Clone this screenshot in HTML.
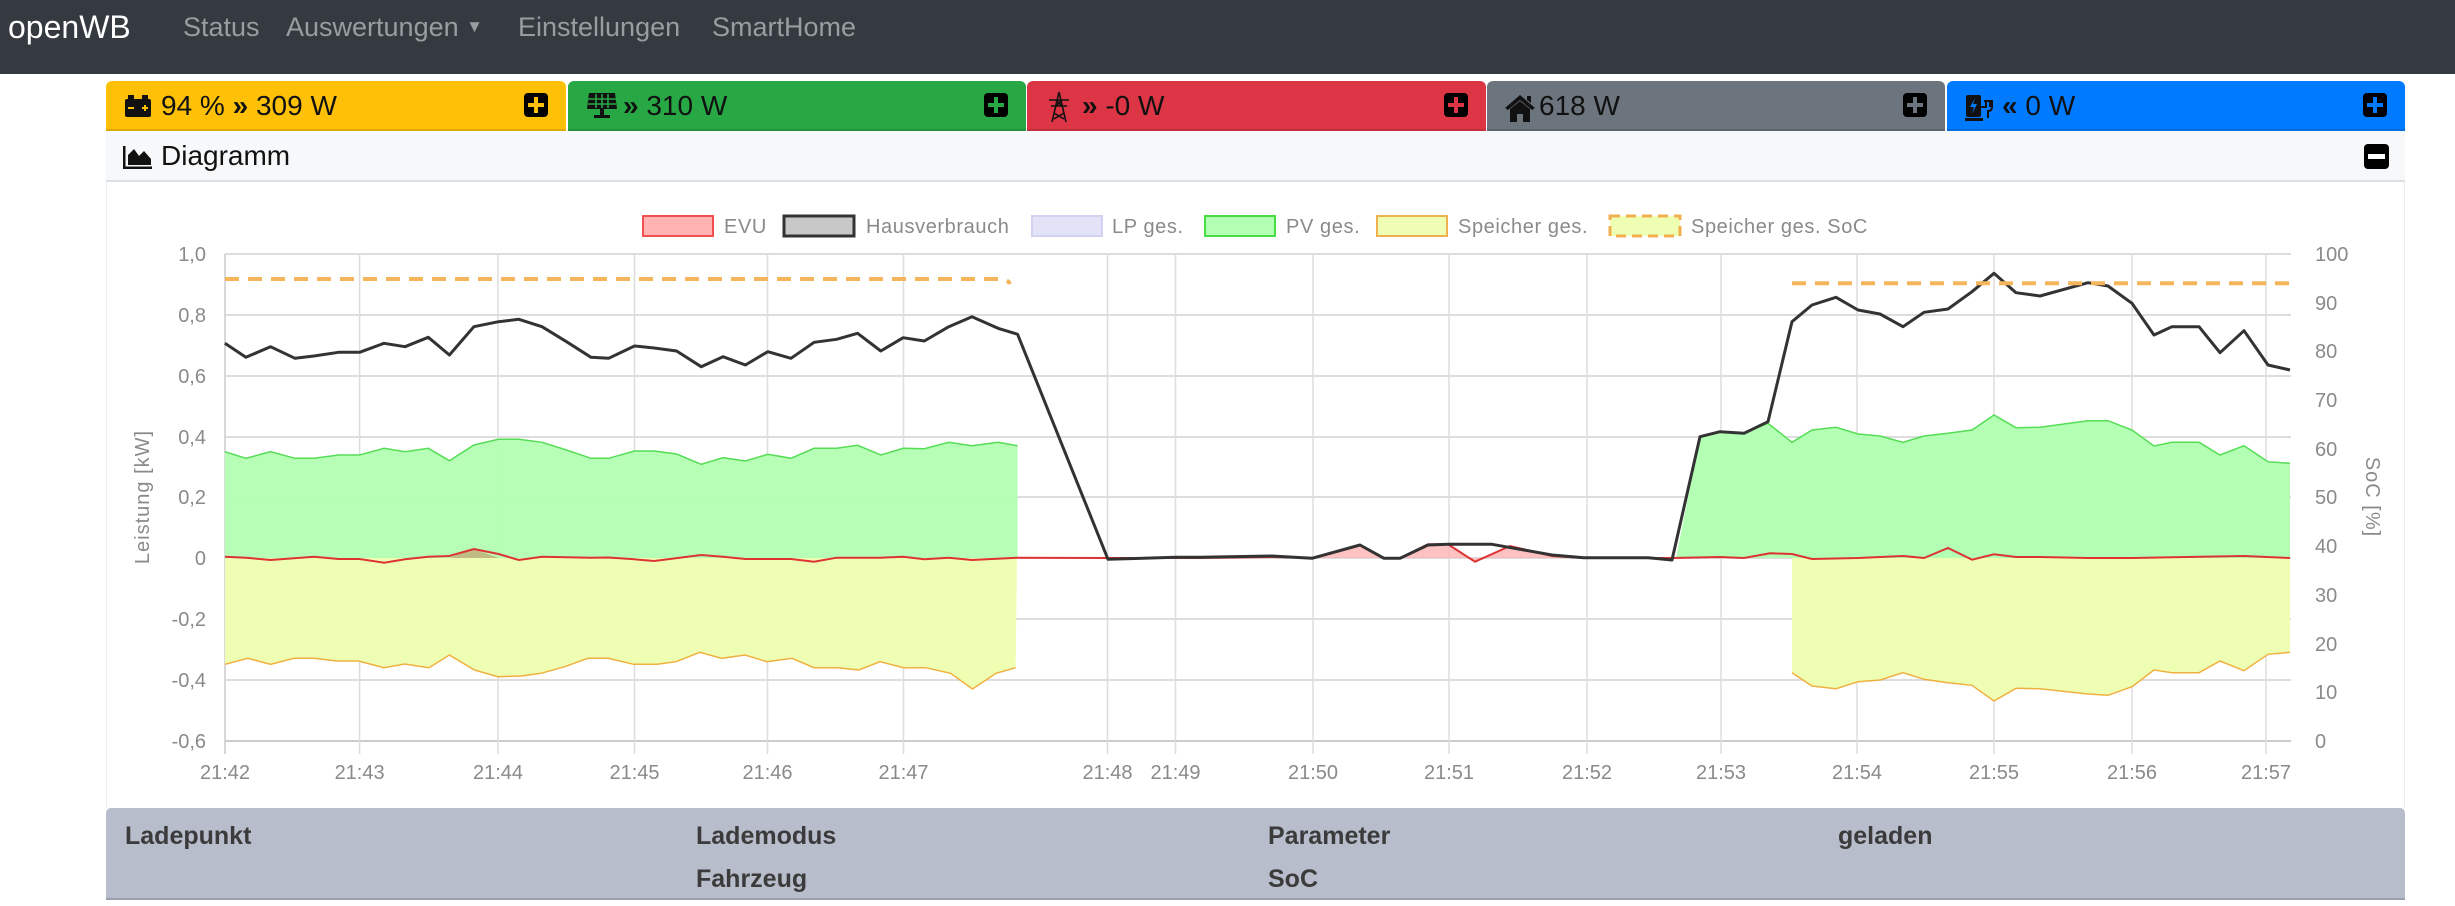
<!DOCTYPE html>
<html><head><meta charset="utf-8">
<style>
*{margin:0;padding:0;box-sizing:border-box}
body{width:2455px;height:906px;background:#fff;font-family:"Liberation Sans",sans-serif;overflow:hidden;position:relative}
.nav{position:absolute;left:0;top:0;width:2455px;height:74px;background:#343a40}
.nav span{position:absolute;top:12px;font-size:27px;color:#9a9da0}
.nav .brand{left:8px;top:9px;font-size:32px;color:#fff}
.tile{position:absolute;top:81px;height:50px;border-radius:6px 6px 0 0;border-bottom:2px solid rgba(0,0,0,.12)}
.tile .t{position:absolute;left:55px;top:9px;font-size:28px;color:#111;white-space:nowrap}
.tile svg.ic{position:absolute;left:17px;top:12px}
.plus{position:absolute;right:18px;top:12px;width:24px;height:24px;background:#000;border-radius:4px}
.plus:before{content:"";position:absolute;left:10px;top:4px;width:4px;height:16px;background:var(--c)}
.plus:after{content:"";position:absolute;left:4px;top:10px;width:16px;height:4px;background:var(--c)}
.hdr{position:absolute;left:106px;top:131px;width:2299px;height:51px;background:#f7f8f9;border-bottom:2px solid #dde0e3}
.hdr .t{position:absolute;left:55px;top:9px;font-size:28px;color:#111}
.minus{position:absolute;right:16px;top:13px;width:25px;height:25px;background:#000;border-radius:4px}
.minus:after{content:"";position:absolute;left:4px;top:10px;width:17px;height:5px;background:#fff}
.tbl{position:absolute;left:106px;top:808px;width:2299px;height:92px;background:#b8bdcb;border-radius:5px 5px 0 0;border-bottom:2px solid #9aa0ad}
.tbl span{position:absolute;font-size:25px;font-weight:bold;color:#3b3b3b}
</style></head><body>
<div class="nav">
<span class="brand">openWB</span>
<span style="left:183px">Status</span>
<span style="left:286px">Auswertungen <small style="font-size:17px;vertical-align:4px">▼</small></span>
<span style="left:518px">Einstellungen</span>
<span style="left:712px">SmartHome</span>
</div>

<div class="tile" style="left:106px;width:460px;background:#ffc107;--c:#ffc107">
<svg class="ic" width="30" height="26" viewBox="0 0 30 26"><rect x="2" y="6" width="26" height="18" rx="2" fill="#111"/><rect x="5" y="2" width="6" height="5" fill="#111"/><rect x="19" y="2" width="6" height="5" fill="#111"/><rect x="5" y="14" width="6" height="2" fill="#ffc107"/><rect x="19" y="14" width="6" height="2" fill="#ffc107"/><rect x="21" y="12" width="2" height="6" fill="#ffc107"/></svg>
<span class="t">94 % <b>»</b> 309 W</span><div class="plus"></div></div>
<div class="tile" style="left:568px;width:458px;background:#28a745;--c:#28a745">
<svg class="ic" width="34" height="30" viewBox="0 0 34 30" style="top:10px"><path d="M4 2H30L32 18H2Z" fill="#111"/><path d="M11 3V17M17 3V17M23 3V17M3 8H31M3 13H31" stroke="#28a745" stroke-width="1.6"/><rect x="15" y="18" width="4" height="6" fill="#111"/><rect x="9" y="24" width="16" height="3" fill="#111"/></svg>
<span class="t"><b>»</b> 310 W</span><div class="plus"></div></div>
<div class="tile" style="left:1027px;width:459px;background:#dc3545;--c:#dc3545">
<svg class="ic" width="30" height="32" viewBox="0 0 30 32" style="top:10px"><path d="M15 1L8 31M15 1L22 31M5 9H25M7 15H23M10 22L20 28M20 22L10 28M12 9L18 15M18 9L12 15" stroke="#111" stroke-width="1.6" fill="none"/></svg>
<span class="t"><b>»</b> -0 W</span><div class="plus"></div></div>
<div class="tile" style="left:1487px;width:458px;background:#6c757d;--c:#6c757d">
<svg class="ic" width="32" height="30" viewBox="0 0 32 30"><path d="M16 2L1 15L4 17L16 7L28 17L31 15Z M6 16V29H13V21H19V29H26V16L16 8Z M23 3H27V10L23 7Z" fill="#111"/></svg>
<span class="t" style="left:52px">618 W</span><div class="plus"></div></div>
<div class="tile" style="left:1947px;width:458px;background:#007bff;--c:#007bff">
<svg class="ic" width="34" height="30" viewBox="0 0 34 30"><rect x="2" y="2" width="15" height="22" rx="2" fill="#111"/><rect x="1" y="25" width="18" height="3" fill="#111"/><path d="M11 5L6 14H10L8 21L13 11H9Z" fill="#007bff"/><path d="M17 14H22V8M26 8V14M20 8H28V14Q28 18 24 18V25" stroke="#111" stroke-width="2" fill="none"/></svg>
<span class="t"><b>«</b> 0 W</span><div class="plus"></div></div>

<div class="hdr">
<svg style="position:absolute;left:17px;top:14px" width="30" height="24" viewBox="0 0 30 24"><path d="M1 1V23H29" stroke="#111" stroke-width="3" fill="none"/><path d="M5 20L5 10L11 4L16 11L21 6L28 14V20Z" fill="#111"/></svg>
<span class="t">Diagramm</span><div class="minus"></div></div>

<svg style="position:absolute;left:0;top:182px" width="2455" height="626" viewBox="0 182 2455 626" font-family="Liberation Sans, sans-serif">
<rect x="106" y="182" width="2299" height="626" fill="#fff"/>
<line x1="2404.5" y1="182" x2="2404.5" y2="808" stroke="#eee"/>
<line x1="106.5" y1="182" x2="106.5" y2="808" stroke="#eee"/>
<!-- legend -->
<g font-size="20" fill="#8a8a8a" letter-spacing="0.6">
<rect x="643" y="216" width="70" height="20" fill="#ffb3b3" stroke="#f05050" stroke-width="2"/><text x="724" y="233">EVU</text>
<rect x="784" y="216" width="70" height="20" fill="#c8c8c8" stroke="#333" stroke-width="3"/><text x="866" y="233">Hausverbrauch</text>
<rect x="1032" y="216" width="70" height="20" fill="#e3e3f8" stroke="#d2d2f0" stroke-width="2"/><text x="1112" y="233">LP ges.</text>
<rect x="1205" y="216" width="70" height="20" fill="#b3ffb3" stroke="#44dd44" stroke-width="2"/><text x="1286" y="233">PV ges.</text>
<rect x="1377" y="216" width="70" height="20" fill="#eeffb3" stroke="#f0b050" stroke-width="2"/><text x="1458" y="233">Speicher ges.</text>
<rect x="1610" y="216" width="70" height="20" fill="#eeffb3" stroke="#f0b050" stroke-width="3" stroke-dasharray="10 6"/><text x="1691" y="233">Speicher ges. SoC</text>
</g>
<!-- grid -->
<g stroke="#ddd" stroke-width="2">
<line x1="225" y1="254" x2="2291" y2="254"/><line x1="225" y1="315" x2="2291" y2="315"/><line x1="225" y1="376" x2="2291" y2="376"/><line x1="225" y1="437" x2="2291" y2="437"/><line x1="225" y1="497" x2="2291" y2="497"/><line x1="225" y1="558" x2="2291" y2="558"/><line x1="225" y1="619" x2="2291" y2="619"/><line x1="225" y1="680" x2="2291" y2="680"/><line x1="225" y1="741" x2="2291" y2="741" stroke="#ccc"/>
</g>
<g stroke="#ddd" stroke-width="1.5">
<line x1="225" y1="254" x2="225" y2="754" stroke="#ccc"/>
<line x1="359.6" y1="254" x2="359.6" y2="754"/><line x1="498" y1="254" x2="498" y2="754"/><line x1="634.5" y1="254" x2="634.5" y2="754"/><line x1="767.5" y1="254" x2="767.5" y2="754"/><line x1="903.5" y1="254" x2="903.5" y2="754"/><line x1="1107.5" y1="254" x2="1107.5" y2="754"/><line x1="1175.5" y1="254" x2="1175.5" y2="754"/><line x1="1313" y1="254" x2="1313" y2="754"/><line x1="1449" y1="254" x2="1449" y2="754"/><line x1="1587" y1="254" x2="1587" y2="754"/><line x1="1721" y1="254" x2="1721" y2="754"/><line x1="1857" y1="254" x2="1857" y2="754"/><line x1="1994" y1="254" x2="1994" y2="754"/><line x1="2132" y1="254" x2="2132" y2="754"/><line x1="2266" y1="254" x2="2266" y2="754"/>
</g>
<!-- fills -->
<polygon fill="#b3ffb3" fill-opacity="0.95" points="224.9,558 224.9,451.7 245.9,458.3 270.5,451.7 295,458.3 314,458.3 338.5,455 359.6,455 384,448.3 405,451.7 428.3,448.3 449.4,460.7 473.9,445 498.5,439.3 518.8,439.3 542,442.3 566.5,450 591,458.3 608.6,458.3 634.5,451 654.2,451 676.6,454 701.2,464.3 723,457.7 745.4,461 767.8,454.3 791,458.3 814.1,448.3 836.6,448.3 857.6,445.3 880.8,455 903.2,448.3 924.3,448.7 948.8,442.3 972,445.7 998,442.3 1017.6,445.7 1017.6,558"/>
<polyline fill="none" stroke="#55dd55" stroke-width="1.5" points="224.9,451.7 245.9,458.3 270.5,451.7 295,458.3 314,458.3 338.5,455 359.6,455 384,448.3 405,451.7 428.3,448.3 449.4,460.7 473.9,445 498.5,439.3 518.8,439.3 542,442.3 566.5,450 591,458.3 608.6,458.3 634.5,451 654.2,451 676.6,454 701.2,464.3 723,457.7 745.4,461 767.8,454.3 791,458.3 814.1,448.3 836.6,448.3 857.6,445.3 880.8,455 903.2,448.3 924.3,448.7 948.8,442.3 972,445.7 998,442.3 1017.6,445.7"/>
<polygon fill="#b3ffb3" points="1676,558 1700,436.7 1720,431.7 1744,433.3 1768,423.3 1792,442.3 1812,430 1836,427.3 1858,434 1880,436 1903,442.3 1924,436 1948,433.3 1972,430 1994,415 2016,427.7 2040,427.3 2088,420.7 2108,420.7 2132,430 2154,446 2172,442.3 2199,442.3 2220,455 2244,445.7 2268,461.7 2290,463.3 2290,558"/>
<polyline fill="none" stroke="#55dd55" stroke-width="1.5" points="1700,436.7 1720,431.7 1744,433.3 1768,423.3 1792,442.3 1812,430 1836,427.3 1858,434 1880,436 1903,442.3 1924,436 1948,433.3 1972,430 1994,415 2016,427.7 2040,427.3 2088,420.7 2108,420.7 2132,430 2154,446 2172,442.3 2199,442.3 2220,455 2244,445.7 2268,461.7 2290,463.3"/>
<polygon fill="#eeffb3" points="225,558 225,664.3 247.8,658.3 270.6,664.3 294,658.3 313.7,658.3 337,661 358.4,661 384,667.7 404.7,664 429,667.7 449.4,655 474.5,670 498,676.7 521.6,676 541,673.3 564.7,666.7 588,658.3 608,658.3 633.7,664.3 657,664.3 676,661.7 700,652.3 721.6,658.3 745,655 767,661.7 792,658.3 814,667.7 837.6,667.7 858.8,670 880,661.7 903.5,667.7 925.5,667.7 950.6,673.3 972.5,689 996,673.3 1015.7,667.7 1017,558"/>
<polyline fill="none" stroke="#f0b040" stroke-width="1.5" points="225,664.3 247.8,658.3 270.6,664.3 294,658.3 313.7,658.3 337,661 358.4,661 384,667.7 404.7,664 429,667.7 449.4,655 474.5,670 498,676.7 521.6,676 541,673.3 564.7,666.7 588,658.3 608,658.3 633.7,664.3 657,664.3 676,661.7 700,652.3 721.6,658.3 745,655 767,661.7 792,658.3 814,667.7 837.6,667.7 858.8,670 880,661.7 903.5,667.7 925.5,667.7 950.6,673.3 972.5,689 996,673.3 1015.7,667.7"/>
<polygon fill="#eeffb3" points="1792,558 1792,672.7 1812,686 1836,688.7 1858,681.7 1880,680 1903,672.7 1924,679.3 1948,682.7 1972,685.3 1994,701 2016,688.3 2040,688.7 2088,694 2108,695.3 2132,686.7 2154,670 2172,672.7 2199,672.7 2220,661 2244,670.7 2268,654.3 2290,652.3 2290,558"/>
<polyline fill="none" stroke="#f0b040" stroke-width="1.5" points="1792,672.7 1812,686 1836,688.7 1858,681.7 1880,680 1903,672.7 1924,679.3 1948,682.7 1972,685.3 1994,701 2016,688.3 2040,688.7 2088,694 2108,695.3 2132,686.7 2154,670 2172,672.7 2199,672.7 2220,661 2244,670.7 2268,654.3 2290,652.3"/>
<!-- EVU -->
<polygon fill="#ffb3b3" fill-opacity="0.8" points="1312,558 1360,545 1384,558 1400,558 1428,544.3 1448,544.3 1475,561.7 1510,546 1552,556 1584,558"/>
<polygon fill="#c89060" fill-opacity="0.6" points="449.4,558 473.9,549 498.5,558"/>
<polyline fill="none" stroke="#dd3333" stroke-width="2" points="225,556.7 245.9,557.7 270.5,560 314,556.7 338.5,559 359.6,559 384,562.7 405,559.3 428.3,556.7 449.4,556 473.9,549 498.5,554 518.8,560 542,556.7 591,557.7 608.6,557.5 634.5,559.3 654.2,561 701.2,555 723,556.7 745.4,559 791,559 814.1,561.7 836.6,557.7 880.8,557.7 903.2,556.7 924.3,559.3 948.8,557.7 972,560 1017.6,557.7 1108,558 1200,558 1272,557 1312,558 1360,545 1384,558 1400,558 1428,544.3 1448,544.3 1475,561.7 1510,546 1552,556 1584,558 1672,558 1720,557 1744,558 1770,553.3 1792,554 1812,559 1858,558 1903,556 1924,558 1948,548 1972,559.7 1994,554.3 2016,557 2040,557 2088,558 2132,558 2244,556 2290,558"/>
<!-- Hausverbrauch -->
<polyline fill="none" stroke="#333" stroke-width="3" stroke-linejoin="round" points="224.9,343.3 245.9,357.3 270.5,346.7 295,358.3 314,356 338.5,352.3 359.6,352.3 384,343.3 405,346.7 428.3,337.3 449.4,355 473.9,326.7 498.5,321.7 518.8,319.3 542,326.7 566.5,341.7 591,357.3 608.6,358.3 634.5,346 654.2,348 676.6,351 701.2,366.7 723,356.7 745.4,365 767.8,351.7 791,358.3 814.1,342.3 836.6,339.3 857.6,333.3 880.8,351 903.2,337.7 924.3,341 948.8,326.7 972,316.7 998,328.3 1017.6,334.3 1108,559.3 1175.4,557.3 1200,557.3 1272,556 1312,558.3 1360,545 1384,558.3 1400,558.3 1428,545 1448,544.3 1492,544.3 1520,549.3 1552,555 1584,557.7 1648,557.7 1672,560 1700,436.7 1720,431.7 1744,433.3 1768,421.7 1792,321.7 1812,305 1836,297.3 1858,310 1880,314 1903,326.7 1924,312.3 1948,309 1972,291.7 1994,273.3 2016,292.7 2040,296 2088,282.7 2108,286 2132,303.3 2154,335 2172,326.7 2199,326.7 2220,352.7 2244,330.7 2268,365 2290,370"/>
<!-- SoC dashed -->
<path d="M225 279H998Q1008 279 1010 284" fill="none" stroke="#f5b55a" stroke-width="4" stroke-dasharray="14 9"/>
<path d="M1792 283.3H2290" fill="none" stroke="#f5b55a" stroke-width="4" stroke-dasharray="14 9"/>
<!-- axis labels -->
<g font-size="20" fill="#8a8a8a" text-anchor="end">
<text x="206" y="261">1,0</text><text x="206" y="322">0,8</text><text x="206" y="383">0,6</text><text x="206" y="444">0,4</text><text x="206" y="504">0,2</text><text x="206" y="565">0</text><text x="206" y="626">-0,2</text><text x="206" y="687">-0,4</text><text x="206" y="748">-0,6</text>
</g>
<g font-size="20" fill="#8a8a8a">
<text x="2315" y="261">100</text><text x="2315" y="310">90</text><text x="2315" y="358">80</text><text x="2315" y="407">70</text><text x="2315" y="456">60</text><text x="2315" y="504">50</text><text x="2315" y="553">40</text><text x="2315" y="602">30</text><text x="2315" y="651">20</text><text x="2315" y="699">10</text><text x="2315" y="748">0</text>
</g>
<g font-size="20" fill="#8a8a8a" text-anchor="middle">
<text x="225" y="779">21:42</text><text x="359.6" y="779">21:43</text><text x="498" y="779">21:44</text><text x="634.5" y="779">21:45</text><text x="767.5" y="779">21:46</text><text x="903.5" y="779">21:47</text><text x="1107.5" y="779">21:48</text><text x="1175.5" y="779">21:49</text><text x="1313" y="779">21:50</text><text x="1449" y="779">21:51</text><text x="1587" y="779">21:52</text><text x="1721" y="779">21:53</text><text x="1857" y="779">21:54</text><text x="1994" y="779">21:55</text><text x="2132" y="779">21:56</text><text x="2266" y="779">21:57</text>
</g>
<text transform="translate(149,497) rotate(-90)" font-size="20" fill="#8a8a8a" text-anchor="middle" letter-spacing="1">Leistung [kW]</text>
<text transform="translate(2366,497) rotate(90)" font-size="20" fill="#8a8a8a" text-anchor="middle" letter-spacing="1">SoC [%]</text>
</svg>

<div class="tbl">
<span style="left:19px;top:14px">Ladepunkt</span>
<span style="left:590px;top:14px">Lademodus</span>
<span style="left:590px;top:57px">Fahrzeug</span>
<span style="left:1162px;top:14px">Parameter</span>
<span style="left:1162px;top:57px">SoC</span>
<span style="left:1732px;top:14px">geladen</span>
</div>
</body></html>
